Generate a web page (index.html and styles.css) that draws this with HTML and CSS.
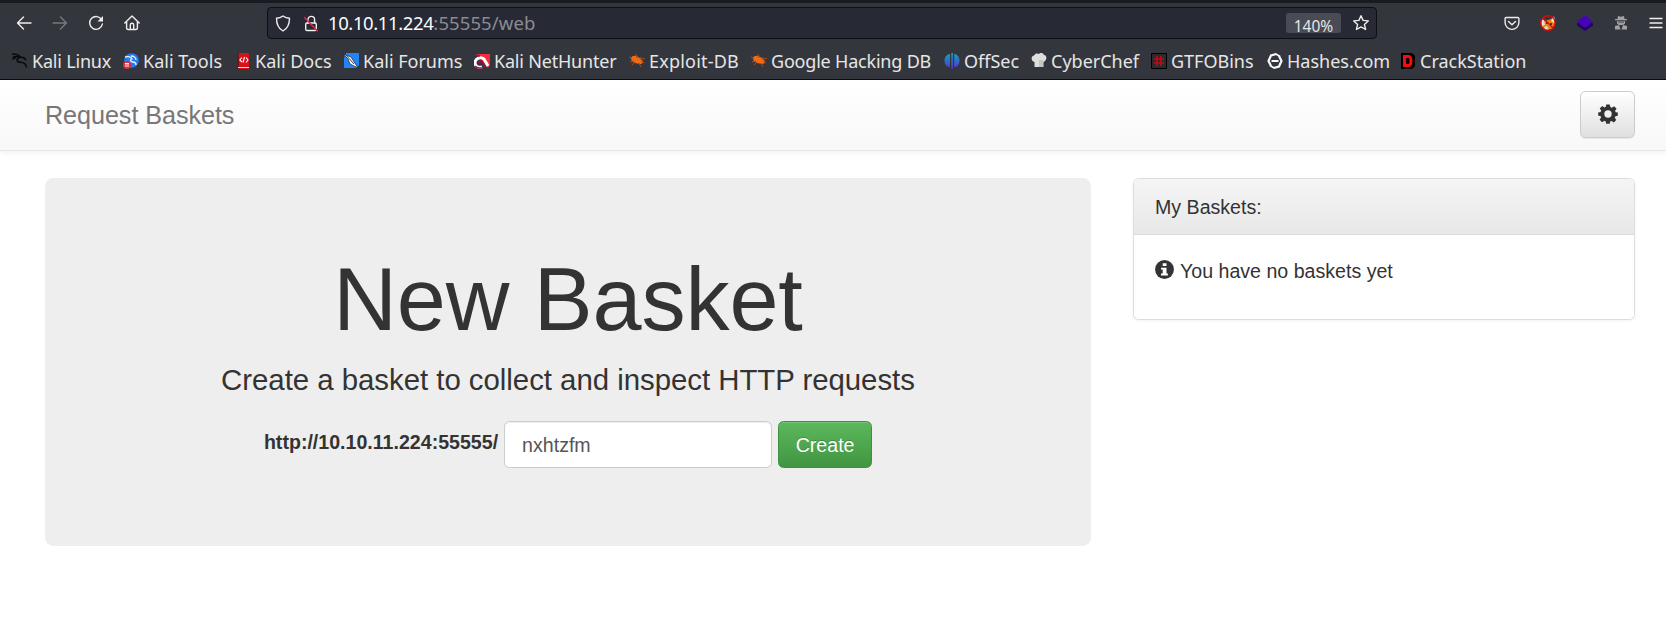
FILE: index.html
```html
<!DOCTYPE html>
<html lang="en">
<head>
<meta charset="utf-8">
<title>Request Baskets</title>
<link rel="stylesheet" href="styles.css">
</head>
<body>
<header class="browser">
  <div class="toolbar">
    <div class="nav-icons">
      <svg width="16" height="16" viewBox="0 0 16 16"><path d="M15 8H1.500M7.500 2L1.500 8l6 6"/></svg>
      <svg class="dim" width="16" height="16" viewBox="0 0 16 16"><path d="M1 8h13.500M8.500 2l6 6-6 6"/></svg>
      <svg width="16" height="16" viewBox="0 0 16 16"><path d="M13.800 5A6.400 6.400 0 1 0 14.400 9"/><path d="M15 1v5.500H9.500z" fill="currentColor" stroke="none"/></svg>
      <svg width="16" height="16" viewBox="0 0 16 16"><path d="M.800 8L8 1l7.200 7M2.600 6.500V13a1.500 1.500 0 0 0 1.500 1.500h7.800a1.500 1.500 0 0 0 1.500-1.500V6.500M6.300 14.500V10a1.700 1.700 0 0 1 3.400 0v4.500"/></svg>
    </div>
    <div class="urlbar">
      <svg width="16" height="17" viewBox="0 0 16 17"><path d="M8 1c2 1.600 4.200 2.200 6.500 2.300C14.500 9 12.800 13.500 8 16 3.200 13.500 1.500 9 1.500 3.300 3.800 3.200 6 2.600 8 1z"/></svg>
      <svg class="lock" width="16" height="17" viewBox="0 0 16 17"><rect x="2.700" y="8" width="10.600" height="7.500" rx="1.300"/><path d="M5 8V4.700a3.300 3.300 0 0 1 6.600 0V8"/><path class="slash" d="M1.500 2.500l13 13.500"/></svg>
      <div class="url"><span class="host">10.10.11.224</span><span class="path">:55555/web</span></div>
      <span class="zoom">140%</span>
      <svg class="star" width="18" height="18" viewBox="0 0 18 18"><path d="M9 1.700l2.100 4.700 5.200.500-3.900 3.500 1.200 5.100L9 12.900l-4.600 2.600 1.200-5.100L1.700 6.900l5.200-.500z"/></svg>
    </div>
    <div class="extensions">
      <svg width="16" height="16" viewBox="0 0 16 16"><path d="M2.300 2.500h11.400a1.200 1.200 0 0 1 1.200 1.200v3.800a6.900 6.900 0 0 1-13.800 0V3.700a1.200 1.200 0 0 1 1.200-1.200z"/><path d="M4.500 6.500L8 9.700l3.500-3.200"/></svg>
      <svg width="16" height="16" viewBox="0 0 16 16"><g stroke="none"><path d="M1 4l4 2 6-2 3-3 1 7-3 6-6 1-5-4z" fill="#e8820c"/><path d="M1 4l3 1 1 5-3 1zM13 2l2 1-1 5-3-2zM4 12l3-1 2 4H5z" fill="#e4ded6"/><path d="M6 7h2v2H6zM10 8h2v2h-2z" fill="#603017"/></g><circle cx="8" cy="8" r="7.300" stroke="#d00b16" fill="none"/><path d="M3 3l10 10" stroke="#d00b16"/></svg>
      <svg width="16" height="16" viewBox="0 0 16 16"><g stroke="none"><path d="M0 8.500L8 3l8 5.500v2L8 16l-8-5.500z" fill="#25006f"/><path d="M0 6.500L8 0l8 6.500L8 13z" fill="#4605b5"/></g></svg>
      <svg width="16" height="16" viewBox="0 0 16 16"><g fill="#a2a2a4" stroke="none"><path d="M5 1l3 .800L11 1l.500 3H14v1.300H2V4h2.500zM4 6h8v2.500L10 10H6L4 8.500zM2 11l4-1 1.500 4.500H2zM14 11l-4-1-1.500 4.500H14z"/></g><path d="M5.500 7h2M8.500 7h2" stroke="#34363e" stroke-width="1"/></svg>
      <svg width="14" height="16" viewBox="0 0 14 16"><path d="M1 3.500h12M1 8h12M1 12.500h12"/></svg>
    </div>
  </div>
  <nav class="bookmarks">
    <a><svg viewBox="0 0 16 16"><path d="M0 1c4 .200 7 .500 8.500 3.200M1 4c3-.800 5-.700 7.500.200-5 1-4 5 0 5.100 4 .100 5.500 1.700 6 5M8.500 4.200c3-.200 4.500.800 5.500 3M0 6l4-1.500" fill="none" stroke="#090a0c" stroke-width="1.600"/></svg><span class="tight">Kali Linux</span></a>
    <a><svg viewBox="0 0 16 16"><circle cx="8.500" cy="7.500" r="7.300" fill="#2878ee"/><path d="M2 4c4-1 6 0 7 2-3 1-1 3 1 3s3 1 3 3M8 3c3 0 5 2 5 4" fill="none" stroke="#e5f2ff" stroke-width="1.300"/><circle cx="4" cy="12" r="4" fill="#e62b36"/><path d="M2 10.500h4M3 10.500V14M5 10.500V14" stroke="#fff"/></svg><span>Kali Tools</span></a>
    <a><svg viewBox="0 0 16 16"><path d="M2 0h12v16H2z" fill="#d51218"/><path d="M2 0h2v16H2z" fill="#7c1018"/><path d="M3 14h11v1H3z" fill="#f4dbd8"/><path d="M7 4.500L4.800 7 7 9M9.500 4L8 9.500M11 4.500L13 7l-2 2.500" fill="none" stroke="#fff" stroke-width="1.100"/></svg><span>Kali Docs</span></a>
    <a><svg viewBox="0 0 16 16"><path d="M3 0h13v12l-3 3H1V5z" fill="#2385f5"/><path d="M0 1l8 3 7 11-8-4-2-5z" fill="#fff" stroke="#17202b" stroke-width=".7"/><path d="M2 1l9 10" stroke="#303640"/></svg><span>Kali Forums</span></a>
    <a><svg viewBox="0 0 16 16"><path d="M3 1h13v11l-2 3z" fill="#f42d38"/><path d="M14 13L10 6C6 3 1 6 1 10c0 3 3 5 7 4" fill="none" stroke="#fff" stroke-width="3"/><path d="M1 2l5 1M5 10c0-3 3-3 4 0l2 4M1 13c2 3 5 2 7 2" fill="none" stroke="#b5093c" stroke-width="1.500"/></svg><span class="tight">Kali NetHunter</span></a>
    <a><svg viewBox="0 0 16 16"><path d="M2 5c1-3 5-3 8-.500L13 7c2 2 0 4-2 4L6 10C3 9 2 7 2 5z" fill="#f16a15"/><path d="M0 4l3 1M7 1l1 4M12 4l-1 2 5-.500M3 12l3-3M10 10l2 4M1 9l4-1M12 8l3 2" stroke="#a94c18" fill="none"/></svg><span class="wide">Exploit-DB</span></a>
    <a><svg viewBox="0 0 16 16"><path d="M2 5c1-3 5-3 8-.500L13 7c2 2 0 4-2 4L6 10C3 9 2 7 2 5z" fill="#f16a15"/><path d="M0 4l3 1M7 1l1 4M12 4l-1 2 5-.500M3 12l3-3M10 10l2 4M1 9l4-1M12 8l3 2" stroke="#a94c18" fill="none"/></svg><span class="tight">Google Hacking DB</span></a>
    <a><svg viewBox="0 0 16 16"><defs><linearGradient id="ocean" x2="0" y2="1"><stop stop-color="#11a8b7"/><stop offset="1" stop-color="#5530d5"/></linearGradient></defs><path d="M6 1v13C2 14 .500 10.500.500 7.500S2.500 1.500 6 1zM7.300 0h1.600v16H7.300zM10.200 1c3.500.500 5.300 3.500 5.300 6.500S14 14 10.200 14z" fill="url(#ocean)"/></svg><span>OffSec</span></a>
    <a><svg viewBox="0 0 16 16"><path d="M3.500 14V9C0 9-.500 3 3 2.500 4 0 7 0 8 1c2-2 4-1 5 1 3 0 3.500 5-.500 7v5z" fill="#dededc"/><path d="M8 7h4v7H8z" fill="#c3c4c4"/></svg><span>CyberChef</span></a>
    <a><svg viewBox="0 0 16 16"><path d="M.500.500h15v15H.500z" fill="#292b30" stroke="#000"/><path d="M6 3v10M10 3v10M3 6h10M3 10h10" stroke="#c40910" stroke-width="1.600"/></svg><span>GTFOBins</span></a>
    <a><svg viewBox="0 0 16 16"><path d="M9.500 1L4 2.500 1.500 8 4 13M12 3l2.500 5L12 13.500 6.500 15M4.500 8h7" stroke="#f8f8f8" stroke-width="2.200" fill="none"/><path d="M9 1l4 2.500M3 12.500L7 15" stroke="#f8f8f8" stroke-width="1.600" fill="none"/></svg><span>Hashes.com</span></a>
    <a><svg viewBox="0 0 16 16"><path d="M1 0h11l3 3v10l-3 3H1z" fill="#000"/><path d="M4.500 3.500h4.200c3 0 3 9 0 9H4.500z" fill="none" stroke="#fa090d" stroke-width="3"/></svg><span>CrackStation</span></a>
  </nav>
</header>
<nav class="navbar">
  <a class="brand">Request Baskets</a>
  <button class="settings" aria-label="Settings"><svg width="20" height="20" viewBox="-10 -10 20 20"><path fill="#333" fill-rule="evenodd" d="M-1.800-9.500h3.600l.500 2.500 1.600.700 2.200-1.500 2.500 2.500L7.100-3.200l.500 1.400 2.200.300v3.300l-2.400.400-.600 1.500 1.500 2.200-2.500 2.500-2.200-1.500-1.400.600-.500 2.200h-3.500l-.500-2.300-1.400-.600-2.200 1.500-2.500-2.500 1.500-2.200-.600-1.500-2.300-.400v-3.300l2.400-.400.600-1.400-1.500-2.200 2.500-2.500 2.200 1.500 1.400-.700zM0-3.700a3.700 3.700 0 1 0 0 7.400 3.700 3.700 0 1 0 0-7.400z"/></svg></button>
</nav>
<main class="content">
  <section class="jumbotron">
    <h1>New Basket</h1>
    <p>Create a basket to collect and inspect HTTP requests</p>
    <form class="create-form">
      <label for="basket">http://10.10.11.224:55555/</label>
      <input id="basket" type="text" value="nxhtzfm">
      <button class="create" type="button">Create</button>
    </form>
  </section>
  <aside class="panel">
    <div class="panel-heading">My Baskets:</div>
    <div class="panel-body">
      <svg width="19" height="19" viewBox="0 0 19 19"><circle cx="9.500" cy="9.500" r="9.400" fill="#333"/><path d="M7.700 3.200h3.800v2.900H7.700zM6 7.700h5.500v5.900h1.400v1.800H6v-1.800h1.700V9.500H6z" fill="#fff"/></svg>
      <span>You have no baskets yet</span>
    </div>
  </aside>
</main>
</body>
</html>
```
FILE: styles.css
```css
* { box-sizing: border-box; }
body { margin: 0; height: 640px; overflow: hidden; background: #fff; color: #333; font-family: "Liberation Sans", Arial, sans-serif; font-size: 19.6px; }

.browser { height: 80px; background: #34363e; border-top: 3px solid #191b20; border-bottom: 1px solid #0c0d11; color: #e6e6e4; font-family: "Noto Sans", sans-serif; }
.toolbar { height: 40px; display: flex; align-items: center; padding: 0 3px 0 16px; }
.toolbar svg { flex: none; color: #eeeeec; stroke: currentColor; stroke-width: 1.4; fill: none; stroke-linecap: round; stroke-linejoin: round; }
.toolbar .dim { color: #77787d; }
.nav-icons { display: flex; gap: 20px; width: 251px; }
.urlbar { width: 1110px; height: 32px; display: flex; align-items: center; padding-left: 7px; background: #272935; border: 1px solid #0d0f15; border-radius: 4px; }
.urlbar .lock { margin-left: 12px; }
.urlbar .slash { stroke: #df2450; }
.url { flex: 1; margin-left: 9px; font-size: 18.5px; line-height: 30px; white-space: nowrap; }
.host { color: #fbfbfb; letter-spacing: -0.4px; }
.path { color: #8b8c93; letter-spacing: 0.1px; }
.zoom { width: 55px; height: 20px; margin-right: 11px; padding-top: 3px; background: #4a4c55; border-radius: 3px; font-size: 15.5px; line-height: 20px; text-align: center; }
.urlbar .star { margin-right: 6px; }
.extensions { flex: 1; display: flex; justify-content: space-between; padding-left: 127px; }

.bookmarks { height: 36px; padding-left: 12px; display: grid; grid-template-columns: 111px 112px 108px 131px 155px 122px 193px 87px 120px 116px 133px 150px; align-items: center; font-size: 18px; line-height: 36px; white-space: nowrap; }
.bookmarks a { display: flex; align-items: center; gap: 4px; }
.bookmarks svg { width: 16px; height: 16px; flex: none; }
.bookmarks .tight { letter-spacing: -0.2px; }
.bookmarks .wide { letter-spacing: 0.2px; }

.navbar { height: 71px; display: flex; align-items: center; justify-content: space-between; padding: 0 31px 2px 45px; background: linear-gradient(#fff, #f8f8f8); border-bottom: 1px solid #e7e7e7; box-shadow: 0 1px 7px rgba(0, 0, 0, .075); }
.brand { padding-top: 1px; color: #777; font-size: 25.2px; line-height: 28px; letter-spacing: -0.07px; }
.settings { width: 55px; height: 47px; padding: 0; display: flex; align-items: center; justify-content: center; border: 1px solid #ccc; border-radius: 5.6px; background: linear-gradient(#fff, #e0e0e0); box-shadow: inset 0 1px 0 rgba(255, 255, 255, .15), 0 1px 1px rgba(0, 0, 0, .075); }

.content { display: grid; grid-template-columns: 1046px 502px; column-gap: 42px; align-items: start; padding: 27px 0 0 45px; }
.jumbotron { height: 368px; padding-top: 73px; border-radius: 8.4px; background: #eee; text-align: center; }
.jumbotron h1 { margin: 0; font-size: 88.2px; line-height: 97px; font-weight: 500; letter-spacing: -0.1px; }
.jumbotron p { margin: 11px 0 20px; font-size: 29.4px; line-height: 42px; font-weight: 400; letter-spacing: -0.03px; }
.create-form { display: flex; justify-content: center; gap: 6px; }
.create-form label { font-weight: 700; line-height: 43px; }
.create-form input { width: 268px; height: 47px; padding: 1px 17px 0; border: 1px solid #ccc; border-radius: 5.6px; background: #fff; color: #555; font: inherit; box-shadow: inset 0 1px 1px rgba(0, 0, 0, .075); }
.create { width: 94px; height: 47px; padding: 1px 0 0; border: 1px solid #3e8f3e; border-radius: 5.6px; background: linear-gradient(#5cb85c, #419641); color: #fff; font: inherit; text-shadow: 0 -1px 0 rgba(0, 0, 0, .2); box-shadow: inset 0 1px 0 rgba(255, 255, 255, .15); }
.panel { height: 142px; border: 1px solid #ddd; border-radius: 5.6px; box-shadow: 0 1px 3px rgba(0, 0, 0, .05); overflow: hidden; }
.panel-heading { height: 56px; padding-left: 21px; border-bottom: 1px solid #ddd; background: linear-gradient(#f5f5f5, #e8e8e8); line-height: 57px; }
.panel-body { display: flex; gap: 6px; padding: 22px 21px; line-height: 28px; }
.panel-body svg { margin-top: 3px; }
```
